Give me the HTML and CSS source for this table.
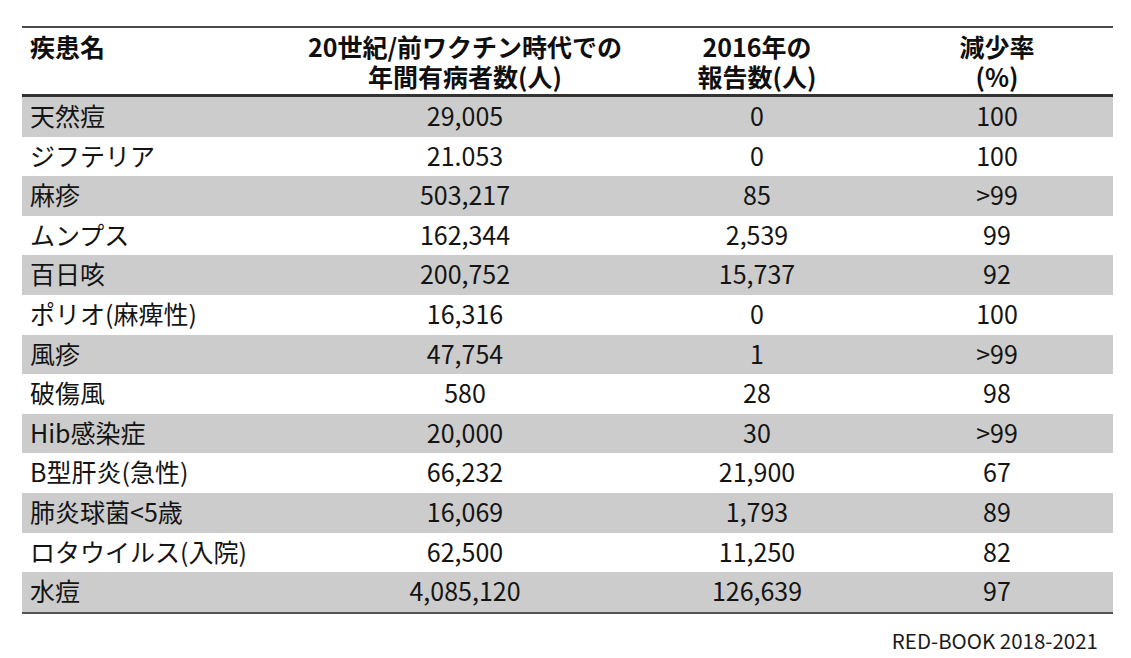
FILE: index.html
```html
<!DOCTYPE html>
<html lang="ja">
<head>
<meta charset="utf-8">
<title>ワクチン</title>
<link rel="stylesheet" href="styles.css">
</head>
<body>
<div class="page">
  <table class="vaccine-table">
    <colgroup>
      <col class="c1"><col class="c2"><col class="c3"><col class="c4">
    </colgroup>
    <thead>
      <tr>
        <th class="name"><span class="hl">疾患名</span></th>
        <th><span class="hl">20世紀/前ワクチン時代での</span><span class="hl">年間有病者数(人)</span></th>
        <th><span class="hl">2016年の</span><span class="hl">報告数(人)</span></th>
        <th><span class="hl">減少率</span><span class="hl">(%)</span></th>
      </tr>
    </thead>
    <tbody>
      <tr class="shade"><td class="name">天然痘</td><td>29,005</td><td>0</td><td>100</td></tr>
      <tr><td class="name">ジフテリア</td><td>21.053</td><td>0</td><td>100</td></tr>
      <tr class="shade"><td class="name">麻疹</td><td>503,217</td><td>85</td><td>&gt;99</td></tr>
      <tr><td class="name">ムンプス</td><td>162,344</td><td>2,539</td><td>99</td></tr>
      <tr class="shade"><td class="name">百日咳</td><td>200,752</td><td>15,737</td><td>92</td></tr>
      <tr><td class="name">ポリオ(麻痺性)</td><td>16,316</td><td>0</td><td>100</td></tr>
      <tr class="shade"><td class="name">風疹</td><td>47,754</td><td>1</td><td>&gt;99</td></tr>
      <tr><td class="name">破傷風</td><td>580</td><td>28</td><td>98</td></tr>
      <tr class="shade"><td class="name">Hib感染症</td><td>20,000</td><td>30</td><td>&gt;99</td></tr>
      <tr><td class="name">B型肝炎(急性)</td><td>66,232</td><td>21,900</td><td>67</td></tr>
      <tr class="shade"><td class="name">肺炎球菌&lt;5歳</td><td>16,069</td><td>1,793</td><td>89</td></tr>
      <tr><td class="name">ロタウイルス(入院)</td><td>62,500</td><td>11,250</td><td>82</td></tr>
      <tr class="shade"><td class="name">水痘</td><td>4,085,120</td><td>126,639</td><td>97</td></tr>
    </tbody>
  </table>
  <div class="source">RED-BOOK 2018-2021</div>
</div>
</body>
</html>
```

FILE: styles.css
```css
html, body {
  margin: 0;
  padding: 0;
  background: #ffffff;
}

body {
  font-family: "Noto Sans CJK JP", "Noto Sans", sans-serif;
  color: #141414;
}

.page {
  padding: 26px 0 0 22px;
  width: 1091px;
}

.vaccine-table {
  width: 1091px;
  border-collapse: collapse;
  table-layout: fixed;
  font-size: 25px;
}

.c1 { width: 275px; }
.c2 { width: 336px; }
.c3 { width: 248px; }
.c4 { width: 232px; }

.vaccine-table thead tr {
  border-top: 2px solid #4a4a4a;
  border-bottom: 3px solid #333333;
}

.vaccine-table th {
  font-weight: 700;
  text-align: center;
  vertical-align: top;
  padding: 3px 0 3px;
  color: #0f0f0f;
}

.hl {
  display: block;
  height: 30px;
  line-height: 30px;
  overflow: visible;
  white-space: nowrap;
}

.vaccine-table td {
  text-align: center;
  line-height: 37.6px;
  height: 37.6px;
  padding: 0 0 2px;
  white-space: nowrap;
}

.vaccine-table th.name,
.vaccine-table td.name {
  text-align: left;
  padding-left: 8px;
}

.vaccine-table tr.shade td {
  background: #cccccc;
}

.vaccine-table tbody tr:last-child {
  border-bottom: 2px solid #555555;
}

.source {
  margin-top: 14px;
  padding-right: 15px;
  text-align: right;
  font-size: 20.5px;
  line-height: 24px;
  color: #1a1a1a;
}
```
